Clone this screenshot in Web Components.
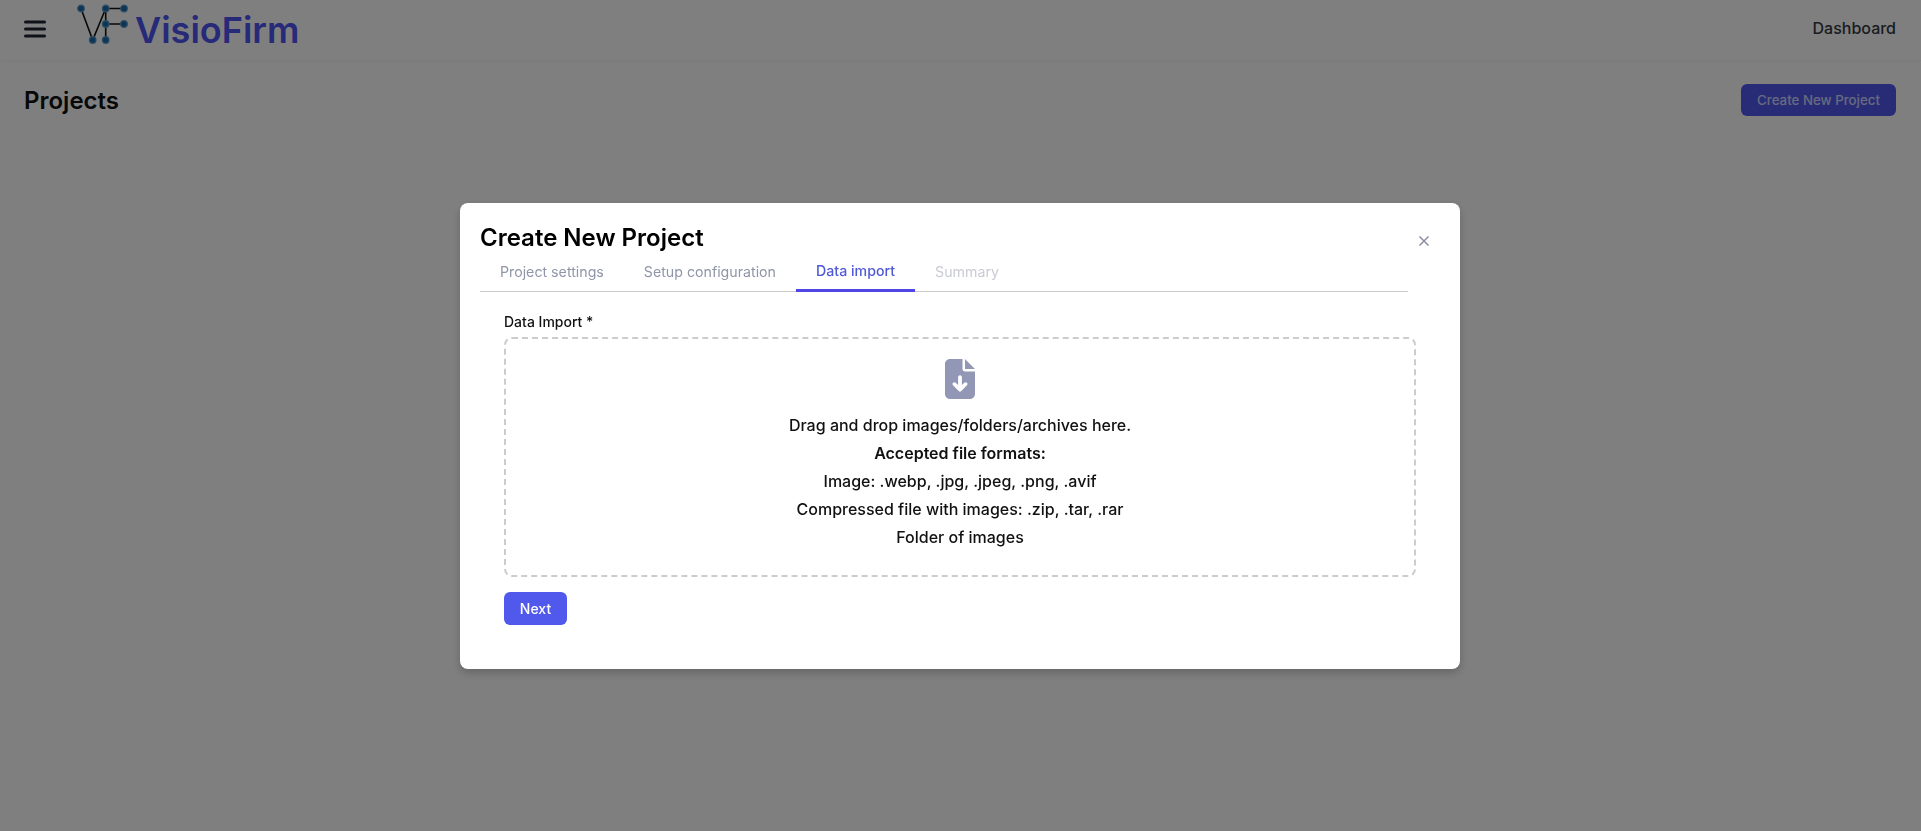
<!DOCTYPE html>
<html lang="en">
<head>
<meta charset="utf-8">
<title>VisioFirm</title>
<style>
  html, body { margin: 0; height: 100%; }
  body { background: #fff; font-family: Inter, "Liberation Sans", sans-serif; overflow: hidden; }
</style>
</head>
<body>
<app-header></app-header>
<projects-bar></projects-bar>
<modal-overlay>
  <project-modal></project-modal>
</modal-overlay>

<script>
class AppHeader extends HTMLElement {
  constructor() {
    super();
    this.shadowDOM = this.attachShadow({mode: "open"});
    this.shadowDOM.innerHTML = `
    <style>
      :host {
        display: flex;
        align-items: center;
        box-sizing: border-box;
        height: 61px;
        padding: 0 25px 0 24px;
        border-bottom: 1px solid #f7f7f7;
        box-shadow: 0 1px 3px rgba(0, 0, 0, 0.03);
        font-family: Inter, "Liberation Sans", sans-serif;
      }
      .menu { display: block; width: 22px; height: 18px; margin-top: -2px; }
      .logo { display: block; width: 56px; height: 44px; margin: -12px 0 0 30px; flex: none; }
      .name {
        margin: 0 0 0 3px;
        font-size: 36px;
        font-weight: 600;
        line-height: 61px;
        color: #4f55f0;
      }
      .nav { margin: -4px 0 0 auto; font-size: 16px; font-weight: 500; color: #333843; }
    </style>
    <svg class="menu" viewBox="0 0 22 18" aria-hidden="true">
      <path d="M1.5 2h19M1.5 9h19M1.5 16h19" stroke="#1f2430" stroke-width="3" stroke-linecap="round" fill="none"/>
    </svg>
    <svg class="logo" viewBox="0 0 56 44" aria-hidden="true">
      <g stroke="#111" stroke-width="1.6" fill="none">
        <path d="M5 6.500 L16.700 38 L29.700 6.500 M29.700 6.500 V38 M29.700 6.500 H48 M29.700 22 H48"/>
      </g>
      <g fill="#1f6aa8" stroke="#5a9ccc" stroke-width="1.200">
        <circle cx="5" cy="6.500" r="3.300"/>
        <circle cx="29.700" cy="6.500" r="3.300"/>
        <circle cx="48" cy="6.500" r="3.300"/>
        <circle cx="29.700" cy="22" r="3.300"/>
        <circle cx="48" cy="22" r="3.300"/>
        <circle cx="16.700" cy="38" r="3.300"/>
        <circle cx="29.700" cy="38" r="3.300"/>
      </g>
    </svg>
    <h1 class="name">VisioFirm</h1>
    <span class="nav">Dashboard</span>`;
  }
}

class ProjectsBar extends HTMLElement {
  constructor() {
    super();
    this.shadowDOM = this.attachShadow({mode: "open"});
    this.shadowDOM.innerHTML = `
    <style>
      :host {
        display: flex;
        align-items: center;
        justify-content: space-between;
        padding: 23px 25px 0 24px;
        font-family: Inter, "Liberation Sans", sans-serif;
      }
      h2 { margin: 0; font-size: 24px; font-weight: 600; color: #111; }
      button {
        height: 32px;
        width: 155px;
        padding: 0;
        border: 0;
        border-radius: 6px;
        background: #5059ec;
        color: #d0d4ff;
        font: 500 13.300px Inter, "Liberation Sans", sans-serif;
      }
    </style>
    <h2>Projects</h2>
    <button>Create New Project</button>`;
  }
}

class ModalOverlay extends HTMLElement {
  constructor() {
    super();
    this.shadowDOM = this.attachShadow({mode: "open"});
    this.shadowDOM.innerHTML = `
    <style>
      :host {
        position: fixed;
        inset: 0;
        display: flex;
        justify-content: center;
        align-items: flex-start;
        box-sizing: border-box;
        padding: 203px 1px 0 0;
        background: rgba(0, 0, 0, 0.5);
      }
    </style>
    <slot></slot>`;
  }
}

class ProjectModal extends HTMLElement {
  constructor() {
    super();
    this.shadowDOM = this.attachShadow({mode: "open"});
    this.shadowDOM.innerHTML = `
    <style>
      :host {
        display: block;
        box-sizing: border-box;
        width: 1000px;
        height: 466px;
        padding: 20px;
        border-radius: 8px;
        background: #fff;
        box-shadow: 0 4px 8px rgba(0, 0, 0, 0.2);
        font-family: Inter, "Liberation Sans", sans-serif;
        color: #111;
      }
      .head { display: flex; }
      .titles { flex: 1; min-width: 0; }
      h2 { margin: 0; font-size: 24px; font-weight: 600; line-height: 29px; color: #000; }
      .tabs { display: flex; margin-top: 2px; border-bottom: 1px solid #ccc; height: 38px; box-sizing: border-box; }
      .close { flex: none; width: 32px; padding-top: 12px; display: flex; justify-content: center; align-items: flex-start; }
      .close svg { display: block; width: 12px; height: 12px; }
      .body { padding: 21px 24px 0 24px; }
      label { display: block; font-size: 14px; font-weight: 500; line-height: 17px; }
      .drop {
        box-sizing: border-box;
        height: 240px;
        margin-top: 7px;
        padding-top: 20px;
        border: 2px dashed #ccc;
        border-radius: 8px;
        text-align: center;
        font-size: 16px;
        font-weight: 500;
        line-height: 28px;
      }
      .drop svg { display: block; width: 30px; height: 40px; margin: 0 auto 12px; }
      .drop b { font-weight: 600; }
      .drop div { height: 28px; }
      .next {
        display: block;
        width: 63px;
        height: 33px;
        margin-top: 15px;
        padding: 0;
        border: 0;
        border-radius: 6px;
        background: #5059ec;
        color: #fff;
        font: 500 14px Inter, "Liberation Sans", sans-serif;
      }
    </style>
    <div class="head">
      <div class="titles">
        <h2>Create New Project</h2>
        <div class="tabs">
          <wizard-tab>Project settings</wizard-tab>
          <wizard-tab>Setup configuration</wizard-tab>
          <wizard-tab state="active">Data import</wizard-tab>
          <wizard-tab state="disabled">Summary</wizard-tab>
        </div>
      </div>
      <div class="close">
        <svg viewBox="0 0 12 12" aria-hidden="true"><path d="M1.500 1.500l9 9M10.500 1.500l-9 9" stroke="#8a8fa3" stroke-width="1.500" fill="none"/></svg>
      </div>
    </div>
    <div class="body">
      <label>Data Import *</label>
      <div class="drop">
        <svg viewBox="0 0 384 512" aria-hidden="true"><path fill="#9297b5" d="M64 0C28.700 0 0 28.700 0 64V448c0 35.300 28.700 64 64 64H320c35.300 0 64-28.700 64-64V160H256c-17.700 0-32-14.300-32-32V0H64zM256 0V128H384L256 0zM216 232V334.100l31-31c9.400-9.400 24.600-9.400 33.900 0s9.400 24.600 0 33.900l-72 72c-9.400 9.400-24.600 9.400-33.900 0l-72-72c-9.400-9.400-9.400-24.600 0-33.900s24.600-9.400 33.900 0l31 31V232c0-13.300 10.700-24 24-24s24 10.700 24 24z"/></svg>
        <div>Drag and drop images/folders/archives here.</div>
        <div><b>Accepted file formats:</b></div>
        <div>Image: .webp, .jpg, .jpeg, .png, .avif</div>
        <div>Compressed file with images: .zip, .tar, .rar</div>
        <div>Folder of images</div>
      </div>
      <button class="next">Next</button>
    </div>`;
  }
}

class WizardTab extends HTMLElement {
  constructor() {
    super();
    this.shadowDOM = this.attachShadow({mode: "open"});
    this.shadowDOM.innerHTML = `
    <style>
      :host {
        display: block;
        box-sizing: border-box;
        height: 38px;
        padding: 9px 20px 0;
        font-size: 14.200px;
        line-height: 17px;
        color: #9096a8;
      }
      :host([state="active"]) {
        padding-top: 8px;
        font-weight: 500;
        color: #5059d8;
        border-bottom: 3px solid #4f46e5;
      }
      :host([state="disabled"]) { color: #c9cbd3; }
    </style>
    <slot></slot>`;
  }
}

customElements.define("app-header", AppHeader);
customElements.define("projects-bar", ProjectsBar);
customElements.define("modal-overlay", ModalOverlay);
customElements.define("project-modal", ProjectModal);
customElements.define("wizard-tab", WizardTab);
</script>
</body>
</html>
